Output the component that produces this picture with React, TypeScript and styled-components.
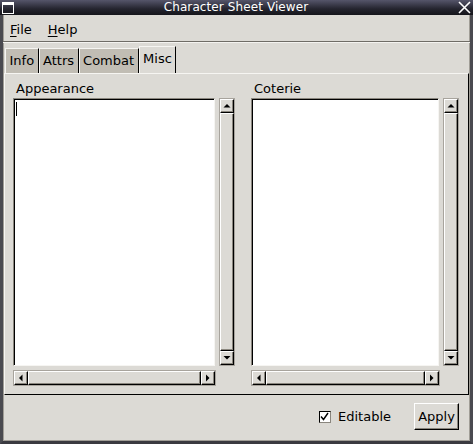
import React from "react";
import styled, { createGlobalStyle } from "styled-components";

const Global = createGlobalStyle`
  html, body { margin: 0; padding: 0; background: #dcdad5; }
  body { font-family: "DejaVu Sans", "Liberation Sans", sans-serif; font-size: 13px; color: #000; }
`;

const Window = styled.div`
  width: 473px;
  height: 444px;
  display: flex;
  flex-direction: column;
  box-sizing: border-box;
  background: #dcdad5;
  overflow: hidden;
`;

const TitleBar = styled.div`
  height: 15px;
  flex: none;
  display: flex;
  align-items: center;
  justify-content: space-between;
  padding: 0 2px;
  background: linear-gradient(#55556a, #24242e 60%, #15151b);
  color: #fff;
  font-size: 12px;
  line-height: 15px;
`;

const TitleText = styled.span`
  flex: 1;
  text-align: center;
  letter-spacing: 0.1px;
`;

const Body = styled.div`
  flex: 1;
  display: flex;
  flex-direction: column;
  border-left: 3px solid #4a4a50;
  border-right: 3px solid #4a4a50;
  border-bottom: 3px solid #3a3a40;
  box-shadow: inset 0 -1px 0 #a09d96, inset 1px 0 0 #a09d96, inset -1px 0 0 #a09d96;
  min-height: 0;
`;

const MenuBar = styled.div`
  height: 27px;
  flex: none;
  display: flex;
  align-items: center;
  gap: 16px;
  padding: 3px 7px 0;
  box-sizing: border-box;
  border-bottom: 1px solid #6f6c66;
  box-shadow: 0 1px 0 #f4f3f0;
`;

const MenuItem = styled.span`
  line-height: 16px;
  & u { text-decoration: underline; text-underline-offset: 2px; }
`;

const Content = styled.div`
  flex: 1;
  display: flex;
  flex-direction: column;
  padding: 4px 1px 0 1px;
  min-height: 0;
`;

const TabRow = styled.div`
  display: flex;
  align-items: flex-end;
  height: 27px;
  padding-left: 1px;
  flex: none;
`;

const Tab = styled.div<{ $active?: boolean }>`
  height: ${(p) => (p.$active ? 27 : 25)}px;
  box-sizing: border-box;
  padding: 0 3.5px 0 3.5px;
  display: flex;
  align-items: center;
  background: ${(p) => (p.$active ? "#dcdad5" : "#c1bdb4")};
  border-top: 1px solid #f6f5f2;
  border-left: 1px solid #f6f5f2;
  border-right: 1px solid #000;
  line-height: 16px;
  padding-bottom: ${(p) => (p.$active ? 2 : 0)}px;
`;

const Panel = styled.div`
  flex: 1;
  display: grid;
  grid-template-columns: 222px 208px;
  column-gap: 16px;
  padding: 7px 9px 8px 8px;
  border-top: 1px solid #f6f5f2;
  border-left: 1px solid #f6f5f2;
  border-right: 1px solid #000;
  border-bottom: 1px solid #000;
  min-height: 0;
`;

const Column = styled.div`
  display: flex;
  flex-direction: column;
  min-height: 0;
`;

const FieldLabel = styled.div`
  line-height: 16px;
  padding-left: 3px;
  margin-bottom: 1px;
`;

const EditRow = styled.div`
  flex: 1;
  display: flex;
  gap: 4px;
  min-height: 0;
`;

const TextArea = styled.div`
  flex: 1;
  position: relative;
  background: #fff;
  border: 1px solid;
  border-color: #8a867e #f6f5f2 #f6f5f2 #8a867e;
  box-shadow: inset 1px 1px 0 #000;
`;

const Caret = styled.span`
  position: absolute;
  left: 2px;
  top: 3px;
  width: 1px;
  height: 14px;
  background: #000;
`;

const VScroll = styled.div`
  width: 14px;
  display: flex;
  flex-direction: column;
  border: 1px solid #a8a49d;
  background: #c4c1ba;
`;

const HScroll = styled.div<{ $trim: number }>`
  height: 14px;
  margin-top: 4px;
  margin-right: ${(p) => p.$trim}px;
  display: flex;
  border: 1px solid #a8a49d;
  background: #c4c1ba;
`;

const ArrowButton = styled.div`
  width: 14px;
  height: 14px;
  flex: none;
  box-sizing: border-box;
  display: flex;
  align-items: center;
  justify-content: center;
  background: #dcdad5;
  border: 1px solid;
  border-color: #fff #000 #000 #fff;
  box-shadow: inset -1px -1px 0 #8a867e;
`;

const Thumb = styled.div`
  flex: 1;
  box-sizing: border-box;
  background: #dcdad5;
  border: 1px solid;
  border-color: #fff #000 #000 #fff;
  box-shadow: inset -1px -1px 0 #8a867e;
`;

const Footer = styled.div`
  height: 46px;
  flex: none;
  display: flex;
  align-items: center;
  justify-content: flex-end;
  padding: 0 10px 3px 0;
  box-sizing: border-box;
`;

const CheckLabel = styled.label`
  display: flex;
  align-items: center;
  gap: 7px;
  margin-right: 23px;
  line-height: 16px;
`;

const CheckBox = styled.span`
  width: 12px;
  height: 12px;
  box-sizing: border-box;
  background: #fff;
  border: 1px solid;
  border-color: #000 #8a867e #8a867e #000;
  display: flex;
  align-items: center;
  justify-content: center;
`;

const Button = styled.div`
  width: 45px;
  height: 27px;
  box-sizing: border-box;
  display: flex;
  align-items: center;
  justify-content: center;
  background: #dcdad5;
  border: 1px solid;
  border-color: #fff #000 #000 #fff;
  box-shadow: inset -1px -1px 0 #8a867e;
  line-height: 16px;
`;

type Dir = "up" | "down" | "left" | "right";

const Arrow = ({ dir }: { dir: Dir }) => {
  const pts: Record<Dir, string> = {
    up: "0.5,4.5 7.5,4.5 4,1",
    down: "0.5,1 7.5,1 4,4.5",
    left: "4.5,0.5 4.5,7.5 1,4",
    right: "1,0.5 1,7.5 4.5,4",
  };
  const vertical = dir === "up" || dir === "down";
  return (
    <svg width={vertical ? 8 : 6} height={vertical ? 6 : 8} viewBox={vertical ? "0 0 8 6" : "0 0 6 8"}>
      <polygon points={pts[dir]} fill="#000" />
    </svg>
  );
};

const WinIcon = () => (
  <svg width="12" height="12" viewBox="0 0 12 12">
    <rect x="0.5" y="0.5" width="11" height="11" fill="none" stroke="#fff" />
    <rect x="1" y="1" width="10" height="2" fill="#fff" />
  </svg>
);

const CloseIcon = () => (
  <svg width="13" height="13" viewBox="0 0 13 13">
    <path d="M1 1 L12 12 M12 1 L1 12" stroke="#fff" strokeWidth="1.6" />
  </svg>
);

const CheckMark = () => (
  <svg width="9" height="9" viewBox="0 0 9 9">
    <path d="M1 4.5 L3.5 7.5 L8 1" stroke="#000" strokeWidth="1.4" fill="none" />
  </svg>
);

const Field = ({ label, caret, trim }: { label: string; caret?: boolean; trim: number }) => (
  <Column>
    <FieldLabel>{label}</FieldLabel>
    <EditRow>
      <TextArea>{caret && <Caret />}</TextArea>
      <VScroll>
        <ArrowButton>
          <Arrow dir="up" />
        </ArrowButton>
        <Thumb />
        <ArrowButton>
          <Arrow dir="down" />
        </ArrowButton>
      </VScroll>
    </EditRow>
    <HScroll $trim={trim}>
      <ArrowButton>
        <Arrow dir="left" />
      </ArrowButton>
      <Thumb />
      <ArrowButton>
        <Arrow dir="right" />
      </ArrowButton>
    </HScroll>
  </Column>
);

export default function App() {
  return (
    <>
      <Global />
      <Window>
        <TitleBar>
          <WinIcon />
          <TitleText>Character Sheet Viewer</TitleText>
          <CloseIcon />
        </TitleBar>
        <Body>
          <MenuBar>
            <MenuItem>
              <u>F</u>ile
            </MenuItem>
            <MenuItem>
              <u>H</u>elp
            </MenuItem>
          </MenuBar>
          <Content>
            <TabRow>
              <Tab>Info</Tab>
              <Tab>Attrs</Tab>
              <Tab>Combat</Tab>
              <Tab $active>Misc</Tab>
            </TabRow>
            <Panel>
              <Field label="Appearance" caret trim={19} />
              <Field label="Coterie" trim={19} />
            </Panel>
            <Footer>
              <CheckLabel>
                <CheckBox>
                  <CheckMark />
                </CheckBox>
                Editable
              </CheckLabel>
              <Button>Apply</Button>
            </Footer>
          </Content>
        </Body>
      </Window>
    </>
  );
}
